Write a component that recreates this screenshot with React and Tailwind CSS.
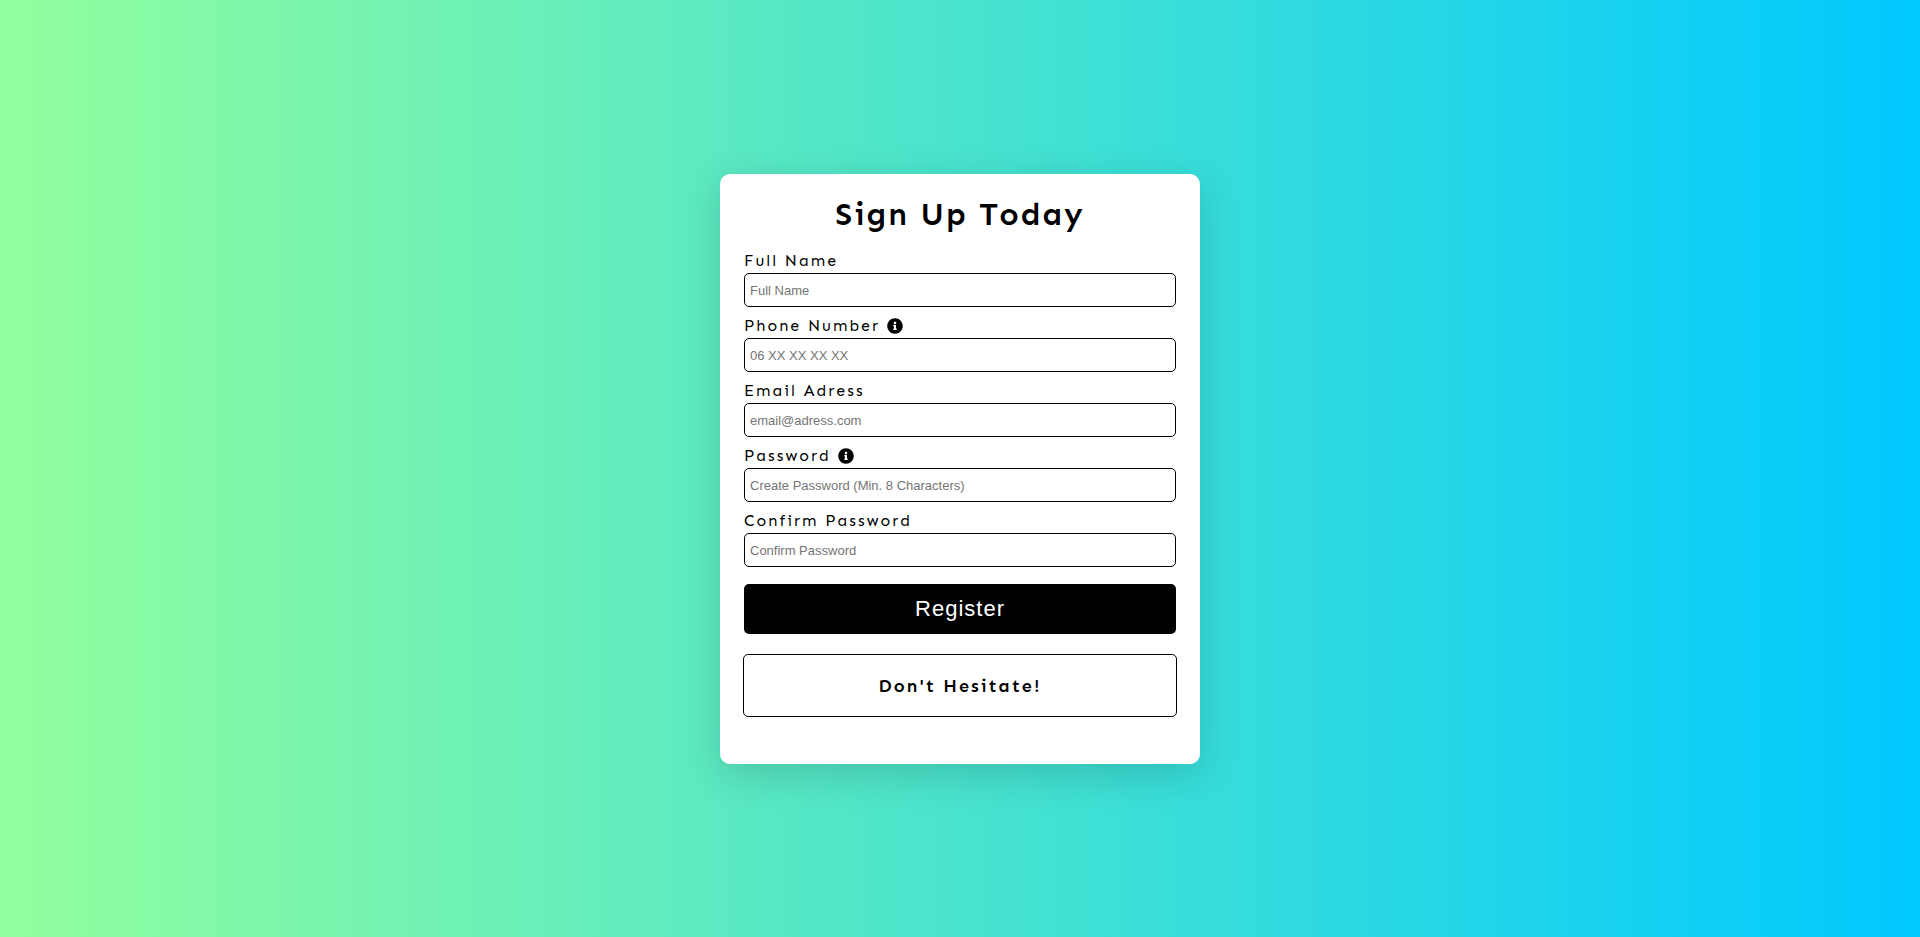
import { FaInfoCircle } from "react-icons/fa";

const fields = [
  { id: "name", label: "Full Name", type: "text", placeholder: "Full Name" },
  { id: "phone", label: "Phone Number", type: "tel", placeholder: "06 XX XX XX XX", info: true },
  { id: "email", label: "Email Adress", type: "email", placeholder: "email@adress.com" },
  { id: "password", label: "Password", type: "password", placeholder: "Create Password (Min. 8 Characters)", info: true },
  { id: "confirm", label: "Confirm Password", type: "password", placeholder: "Confirm Password" },
];

function Field({ id, label, type, placeholder, info }) {
  return (
    <div className="flex flex-col">
      <label htmlFor={id} className="flex h-6 items-center gap-[7px] text-base tracking-[2px]">
        {label}
        {info && <FaInfoCircle className="size-4" aria-hidden="true" />}
      </label>
      <input
        id={id}
        type={type}
        placeholder={placeholder}
        className="h-[34px] w-full rounded-[5px] border border-black px-[5px] pt-0.5 font-['Liberation_Sans',Arial,sans-serif] text-[13px] placeholder:text-[#757575]"
      />
    </div>
  );
}

export default function App() {
  return (
    <main className="flex min-h-screen items-center justify-center bg-linear-[90deg,#92fe9d,#00c9ff] font-['Sen',Lato,sans-serif] text-black">
      <div className="w-full max-w-[480px] rounded-[10px] bg-white px-6 pt-5 pb-[47px] shadow-[0_10px_40px_rgba(0,0,0,0.16)]">
        <h1 className="text-center text-[32px] leading-10 font-semibold tracking-[2px]">Sign Up Today</h1>
        <form className="mt-[15px] flex flex-col gap-[7px]">
          {fields.map((field) => (
            <Field key={field.id} {...field} />
          ))}
          <button
            type="submit"
            className="mt-2.5 h-[50px] w-full rounded-[5px] bg-black font-['Liberation_Sans',Arial,sans-serif] text-[22px] tracking-[1px] text-white"
          >
            Register
          </button>
        </form>
        <div className="-mx-px mt-5 flex h-[63px] items-center justify-center rounded-[5px] border border-black pt-0.5">
          <h3 className="text-lg font-semibold tracking-[2px]">Don't Hesitate!</h3>
        </div>
      </div>
    </main>
  );
}
